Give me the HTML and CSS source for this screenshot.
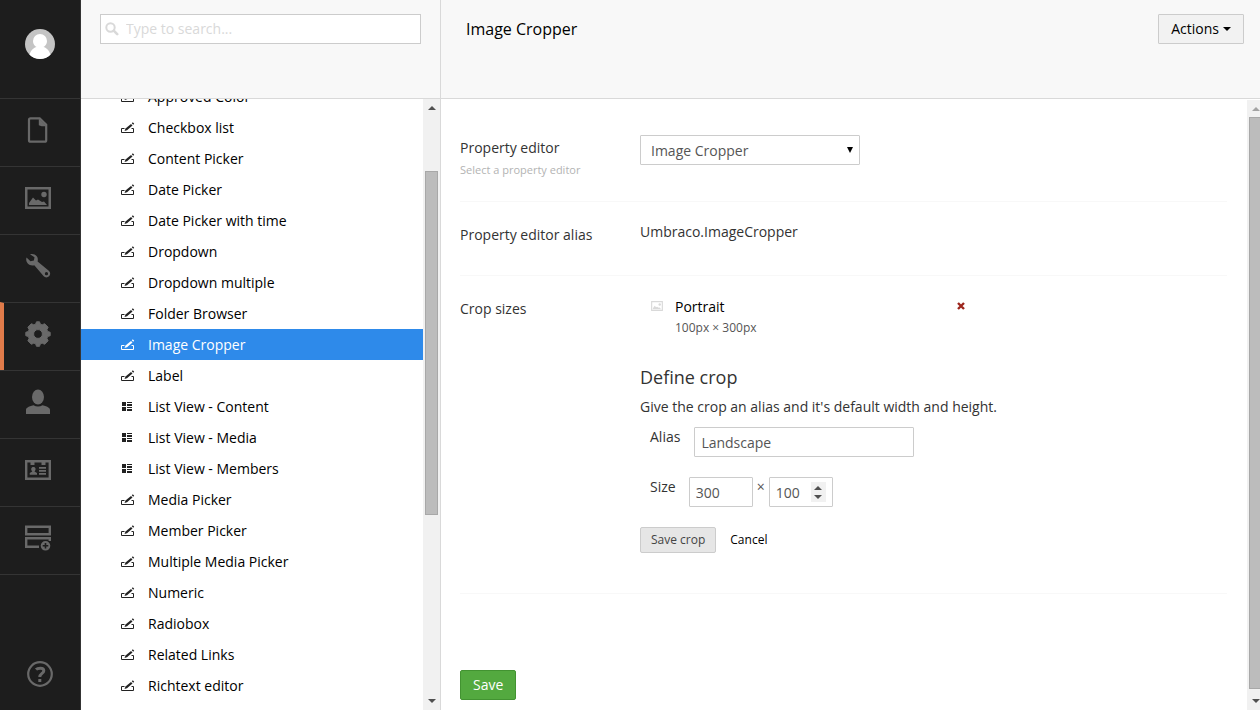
FILE: index.html
```html
<!DOCTYPE html>
<html lang="en">
<head>
<meta charset="utf-8">
<meta name="viewport" content="width=device-width, initial-scale=1">
<title>Image Cropper</title>
<link rel="stylesheet" href="styles.css">
</head>
<body>
<svg class="symbols" aria-hidden="true">
  <symbol id="edit" viewBox="0 0 14 12"><path d="M3.500 6.500h-3v4h12v-4h-2" fill="none" stroke="currentColor"/><path d="M3.500 9l1-2.500L10 2l1.500 1.400L6 8.200z" fill="currentColor"/><path d="M10.800 1.300l1-1L13.200 1.700l-1 1z" fill="currentColor"/></symbol>
  <symbol id="list" viewBox="0 0 14 12"><path d="M1 1h4v4H1zM1 6h4v4H1zM6 1h5v1H6zM6 3h5v2H6zM6 6h5v1H6zM6 8h5v2H6z" fill="currentColor"/></symbol>
  <symbol id="picture" viewBox="0 0 26 22"><path d="M1.250 1.250h23.500v19.500H1.250z" fill="none" stroke="currentColor" stroke-width="2.500"/><path d="M4 18v-2l4-5.500 3 3 2-1 4 2.500 2-.5 3 3.500z" fill="currentColor"/><circle cx="19" cy="7.500" r="2.700" fill="currentColor"/></symbol>
</svg>

<nav class="sections" aria-label="Sections">
  <button class="avatar" aria-label="User profile"><svg viewBox="0 0 30 30"><circle cx="15" cy="15" r="15" fill="#c4c4c4"/><path d="M4.500 25.700C6 20.500 9 18.800 11.500 18 9.300 16.800 8 14.700 8 12a7 7 0 0 1 14 0c0 2.700-1.300 4.800-3.500 6 2.500.8 5.500 2.500 7 7.700A15 15 0 0 1 4.500 25.700z" fill="#fff"/></svg></button>
  <a class="section" href="#" aria-label="Content"><svg width="26" height="26" viewBox="0 0 26 26"><path d="M5.500 1.300h9.200l6.500 6.500v15.400q0 1.500-1.500 1.500H5.500Q4 24.700 4 23.200V2.800Q4 1.300 5.500 1.300z" fill="none" stroke="currentColor" stroke-width="2.200"/><path d="M13.800 1.500l8 7.800h-5.200l-2.800-1z" fill="currentColor"/></svg></a>
  <a class="section" href="#" aria-label="Media"><svg width="26" height="22"><use href="#picture"/></svg></a>
  <a class="section" href="#" aria-label="Settings"><svg width="26" height="26" viewBox="0 0 26 26"><path fill-rule="evenodd" d="M5 1.300c3-.9 6.200.2 7.400 3 .6 1.500.5 2.700.2 4.100l11.200 9.400c1.700 1.500 1.800 4 .3 5.500-1.600 1.600-4.100 1.500-5.600-.2L9.300 12.200c-3 .6-5.900-.3-7.400-3-.8-1.500-.9-3.100-.4-4.700l4 3.700 3.400-.8.6-3.200zM21.400 19.100a1.600 1.600 0 1 0 .1 3.200 1.600 1.600 0 0 0-.1-3.200z" fill="currentColor"/></svg></a>
  <a class="section active" href="#" aria-label="Developer"><svg width="26" height="26" viewBox="0 0 26 26"><path fill-rule="evenodd" d="M10.700 3.100 11.500.8h3l.8 2.300 1.800.8 2.500-1.200 3.500 3.500-1.200 2.500.8 1.800 2.500.8v3.400l-2.500.8-.8 1.800 1.200 2.500-3.500 3.500-2.500-1.200-1.800.8-.8 2.400h-3l-.8-2.400-1.800-.8-2.500 1.200-3.500-3.500 1.200-2.500-.8-1.800-2.500-.8v-3.400l2.500-.8.8-1.800-1.200-2.500 3.500-3.500 2.500 1.200zM13 8.600a4.400 4.400 0 1 0 0 8.800 4.400 4.400 0 0 0 0-8.800z" fill="currentColor" stroke="currentColor" stroke-linejoin="round"/></svg></a>
  <a class="section" href="#" aria-label="Users"><svg width="26" height="26" viewBox="0 0 26 26"><ellipse cx="13" cy="8" rx="6" ry="7.500" fill="currentColor"/><path d="M1 25v-4c0-2 2-3.200 7.500-4.700 2.800 1.700 6.200 1.700 9 0C23 17.800 25 19 25 21v4z" fill="currentColor"/></svg></a>
  <a class="section" href="#" aria-label="Members"><svg width="26" height="20" viewBox="0 0 26 20"><path d="M1.200 1.200h23.600v17.600H1.200z" fill="none" stroke="currentColor" stroke-width="2.400"/><path d="M5.500 1h4v4h-4zM16.500 1h4v4h-4zM14 7h7v1.700h-7zM14 10h7v1.700h-7zM14 13h7v1.700h-7zM4.700 14.700V13l2.600-1.400C5.500 9.500 6 7 8.400 7s2.900 2.500 1.100 4.600L12 13v1.700z" fill="currentColor"/></svg></a>
  <a class="section" href="#" aria-label="Forms"><svg width="26" height="26" viewBox="0 0 26 26"><path d="M1.200 1.700h23.600v7.600H1.200zM24.800 16v-2.800H1.200v8.500H14" fill="none" stroke="currentColor" stroke-width="2.400"/><path fill-rule="evenodd" d="M20.500 16a4.800 4.800 0 1 0 0 9.600 4.800 4.800 0 0 0 0-9.600zm-.8 2h1.600v2h2v1.600h-2v2h-1.600v-2h-2V20h2z" fill="currentColor"/></svg></a>
  <a class="help" href="#" aria-label="Help"><svg width="26" height="26" viewBox="0 0 26 26"><circle cx="13" cy="13" r="11.800" fill="none" stroke="currentColor" stroke-width="2.200"/><path d="M9 8.500c1.500-1.500 7.800-2.500 7.800 1.200 0 2.700-4 2.700-4 6.300" fill="none" stroke="currentColor" stroke-width="3"/><path d="M11.300 18h3v3h-3z" fill="currentColor"/></svg></a>
</nav>

<aside class="browser">
  <header class="bar search-bar">
    <label class="search">
      <svg width="14" height="14" viewBox="0 0 14 14"><circle cx="5.500" cy="5.500" r="4.200" fill="none" stroke="currentColor" stroke-width="2"/><path d="M8.700 8.700l3.500 3.500" stroke="currentColor" stroke-width="2.600" stroke-linecap="round"/></svg>
      <input type="text" placeholder="Type to search..." aria-label="Search">
    </label>
  </header>
  <div class="pane">
    <ul class="tree">
      <li><a href="#"><svg><use href="#edit"/></svg>Approved Color</a></li>
      <li><a href="#"><svg><use href="#edit"/></svg>Checkbox list</a></li>
      <li><a href="#"><svg><use href="#edit"/></svg>Content Picker</a></li>
      <li><a href="#"><svg><use href="#edit"/></svg>Date Picker</a></li>
      <li><a href="#"><svg><use href="#edit"/></svg>Date Picker with time</a></li>
      <li><a href="#"><svg><use href="#edit"/></svg>Dropdown</a></li>
      <li><a href="#"><svg><use href="#edit"/></svg>Dropdown multiple</a></li>
      <li><a href="#"><svg><use href="#edit"/></svg>Folder Browser</a></li>
      <li><a href="#" class="current"><svg><use href="#edit"/></svg>Image Cropper</a></li>
      <li><a href="#"><svg><use href="#edit"/></svg>Label</a></li>
      <li><a href="#"><svg><use href="#list"/></svg>List View - Content</a></li>
      <li><a href="#"><svg><use href="#list"/></svg>List View - Media</a></li>
      <li><a href="#"><svg><use href="#list"/></svg>List View - Members</a></li>
      <li><a href="#"><svg><use href="#edit"/></svg>Media Picker</a></li>
      <li><a href="#"><svg><use href="#edit"/></svg>Member Picker</a></li>
      <li><a href="#"><svg><use href="#edit"/></svg>Multiple Media Picker</a></li>
      <li><a href="#"><svg><use href="#edit"/></svg>Numeric</a></li>
      <li><a href="#"><svg><use href="#edit"/></svg>Radiobox</a></li>
      <li><a href="#"><svg><use href="#edit"/></svg>Related Links</a></li>
      <li><a href="#"><svg><use href="#edit"/></svg>Richtext editor</a></li>
    </ul>
    <div class="scrollbar tree-scroll" aria-hidden="true"><i class="up"></i><div class="track"><b class="thumb"></b></div><i class="down"></i></div>
  </div>
</aside>

<main class="editor">
  <header class="bar title-bar">
    <h1>Image Cropper</h1>
    <button class="actions">Actions <i class="caret"></i></button>
  </header>
  <div class="pane">
    <form class="form">
      <div class="group first">
        <div class="name"><label for="type">Property editor</label><small>Select a property editor</small></div>
        <div class="select"><select id="type"><option>Image Cropper</option></select><i class="arrow"></i></div>
      </div>
      <div class="group">
        <div class="name">Property editor alias</div>
        <div>Umbraco.ImageCropper</div>
      </div>
      <div class="group crops">
        <div class="name">Crop sizes</div>
        <div class="crop-editor">
          <div class="crop">
            <svg width="12" height="10"><use href="#picture"/></svg>
            <div class="crop-text"><a href="#">Portrait</a><span>100px × 300px</span></div>
            <button type="button" class="remove" aria-label="Remove Portrait"><svg width="8" height="8" viewBox="0 0 8 8"><path d="M1 1l6 6M7 1L1 7" stroke="currentColor" stroke-width="2.400"/></svg></button>
          </div>
          <h2>Define crop</h2>
          <p>Give the crop an alias and it's default width and height.</p>
          <div class="field"><label for="alias">Alias</label><input id="alias" type="text" value="Landscape"></div>
          <div class="field size">
            <label for="width">Size</label><input id="width" type="number" value="300">
            <span class="times">×</span>
            <div class="number"><input type="number" value="100" aria-label="Height"><span class="spinner"><i class="up"></i><i class="down"></i></span></div>
          </div>
          <div class="buttons"><button type="button" class="save-crop">Save crop</button><a href="#">Cancel</a></div>
        </div>
      </div>
      <button type="button" class="save">Save</button>
    </form>
    <div class="scrollbar main-scroll" aria-hidden="true"><i class="up"></i><div class="track"><b class="thumb"></b></div><i class="down"></i></div>
  </div>
</main>
</body>
</html>
```
FILE: styles.css
```css
* { box-sizing: border-box; }
body {
  margin: 0;
  height: 100vh;
  display: flex;
  overflow: hidden;
  background: #fff;
  color: #333;
  font: 14px/20px "Open Sans", "Noto Sans", sans-serif;
}
a { color: #000; text-decoration: none; }
button, input, select { font: inherit; margin: 0; }
svg { display: block; flex: none; }
.symbols { position: absolute; width: 0; height: 0; }

.sections {
  width: 81px;
  flex: none;
  display: flex;
  flex-direction: column;
  background: #1d1d1d;
  border-right: 1px solid #343434;
}
.avatar {
  height: 98px;
  flex: none;
  padding: 0 0 10px;
  border: 0;
  background: none;
  display: grid;
  place-items: center;
}
.avatar svg { width: 30px; height: 30px; }
.section {
  height: 68px;
  flex: none;
  display: grid;
  place-items: center;
  padding: 0 4px 6px 0;
  border-top: 1px solid #343434;
  color: #696969;
}
.section.active { border-left: 4px solid #e07b4a; padding-right: 8px; }
.help {
  flex: 1;
  display: flex;
  justify-content: center;
  align-items: flex-end;
  padding-bottom: 23px;
  border-top: 1px solid #343434;
  color: #696969;
}

.bar {
  height: 99px;
  flex: none;
  background: #f8f8f8;
  border-bottom: 1px solid #d9d9d9;
}
.pane { flex: 1; min-height: 0; display: flex; overflow: hidden; }
.browser {
  width: 360px;
  flex: none;
  display: flex;
  flex-direction: column;
  border-right: 1px solid #d9d9d9;
}
.search-bar { padding: 14px 19px; }
.search {
  display: flex;
  align-items: center;
  height: 30px;
  padding-left: 4px;
  gap: 7px;
  background: #fff;
  border: 1px solid #ccc;
  color: #d9d9d9;
}
.search input { flex: 1; min-width: 0; padding: 0; border: 0; outline: 0; background: none; }
.search input::placeholder { color: #d9d9d9; opacity: 1; }

.tree { flex: 1; min-width: 0; margin: -18px 0 0; padding: 0; list-style: none; }
.tree a { display: flex; align-items: center; height: 31px; padding-left: 40px; gap: 13px; }
.tree svg { width: 14px; height: 12px; color: #222; }
.tree .current, .tree .current svg { background: #2e8aea; color: #fff; }

.scrollbar { flex: none; display: flex; flex-direction: column; align-items: center; background: #f1f1f1; }
.track { flex: 1; align-self: stretch; display: flex; flex-direction: column; padding: 0 2px; }
.thumb { background: #bcbcbc; border: 1px solid #a8a8a8; }
.up, .down { border: 4px solid transparent; height: 4px; width: 8px; }
.up { border-top: 0; border-bottom-color: #505050; }
.down { border-bottom: 0; border-top-color: #505050; }
.scrollbar > .up { margin: 7px 0; }
.scrollbar > .down { margin: 7px 0; }
.tree-scroll { width: 17px; }
.tree-scroll .track { padding-top: 54px; }
.tree-scroll .thumb { height: 66%; }
.main-scroll { width: 13px; margin-top: 1px; overflow: hidden; }
.main-scroll > .up { border-bottom-color: #a3a3a3; margin-bottom: 6px; }
.main-scroll > .up, .main-scroll > .down { align-self: flex-end; }
.main-scroll .track { padding-right: 0; }
.main-scroll .thumb { flex: 1; border-right: 0; margin-bottom: 3px; }

.editor { flex: 1; min-width: 0; display: flex; flex-direction: column; }
.title-bar { display: flex; justify-content: space-between; align-items: flex-start; padding: 14px 16px 0 25px; }
h1 { margin: 0; font-size: 16px; line-height: 30px; font-weight: 400; color: #000; }
.actions {
  display: flex;
  align-items: center;
  gap: 4px;
  height: 30px;
  padding: 0 12px;
  background: #f2f2f2;
  border: 1px solid #ccc;
  border-radius: 1px;
  color: #000;
}
.caret { border: 4px solid transparent; border-top-color: #000; border-bottom: 0; }

.form { flex: 1; min-width: 0; padding: 36px 20px 0 19px; }
.group { display: flex; padding: 20px 0 30px; border-bottom: 1px solid #f8f8f8; }
.group.first { padding: 0 0 21px; }
.name { width: 180px; flex: none; padding-top: 3px; }
.name label { display: block; }
small { display: block; margin-top: 2px; font-size: 11px; color: #b3b3b3; }
.select { position: relative; width: 220px; }
input, select { color: #555; }
select, .field input {
  appearance: none;
  height: 30px;
  width: 220px;
  padding: 0 6px;
  background: #fff;
  border: 1px solid #ccc;
  border-radius: 1px;
}
select { padding: 1px 10px 0; }
.arrow { position: absolute; right: 7px; top: 12px; border: 3px solid transparent; border-top: 6px solid #000; border-bottom: 0; }
.group.crops { padding-bottom: 40px; }
.crop-editor { flex: 1; max-width: 360px; }
.crop { display: flex; padding: 1px 35px 0 11px; }
.crop > svg { margin: 4px 12px 0 0; color: #d9d9d9; }
.crop-text { flex: 1; }
.crop-text a { display: block; }
.crop-text span { display: block; font-size: 12px; line-height: 22px; color: #555; }
.remove { align-self: flex-start; margin-top: 5px; padding: 0; border: 0; background: none; color: #9d261d; }
h2 { margin: 28px 0 10px; font-size: 18px; line-height: 20px; font-weight: 400; }
p { margin: 0 0 10px; white-space: nowrap; }
.field { display: flex; padding-left: 10px; margin-bottom: 20px; }
.field label { margin-right: 14px; }
.field.size label { margin-right: 13px; }
.field.size input { width: 64px; appearance: textfield; }
.field input::-webkit-inner-spin-button { appearance: none; }
.times { width: 16px; text-align: center; color: #555; }
.number { position: relative; }
.spinner {
  position: absolute;
  right: 7px;
  top: 5px;
  width: 15px;
  height: 20px;
  display: flex;
  flex-direction: column;
  align-items: center;
  justify-content: center;
  gap: 5px;
  background: #f1f1f1;
}
.buttons { display: flex; align-items: center; gap: 14px; font-size: 12px; }
.save-crop { height: 26px; padding: 0 10px; background: #e6e6e6; border: 1px solid #ccc; border-radius: 2px; color: #444; }
.save { display: block; height: 30px; margin-top: 76px; padding: 0 12px; background: #53a93f; border: 1px solid #429331; border-radius: 2px; color: #fff; }
```
